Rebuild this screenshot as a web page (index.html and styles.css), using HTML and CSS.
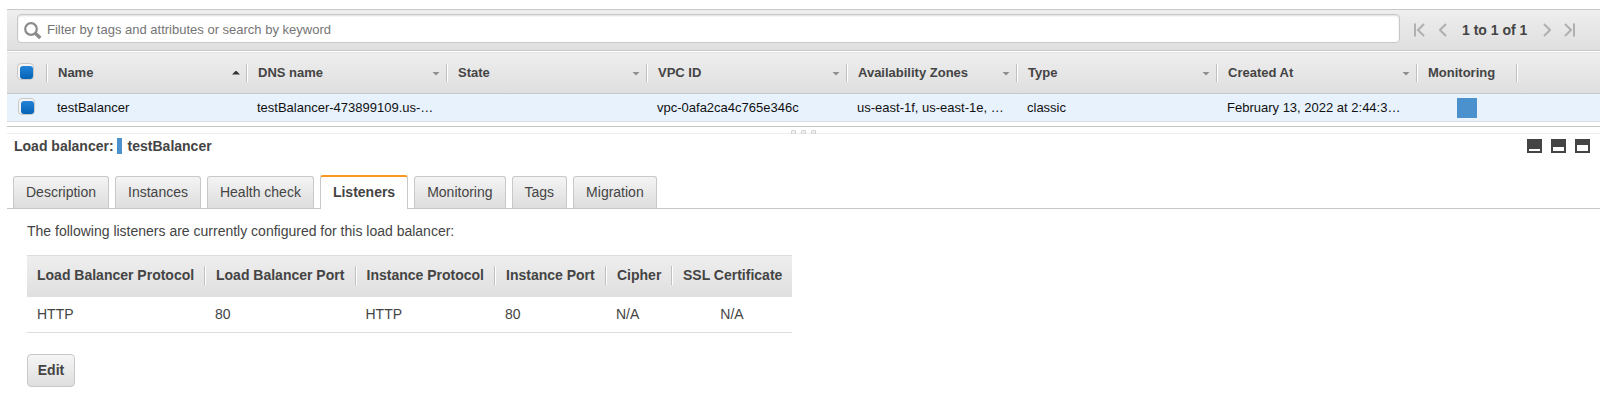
FILE: index.html
```html
<!DOCTYPE html>
<html lang="en">
<head>
<meta charset="utf-8">
<title>Load Balancers</title>
<link rel="stylesheet" href="styles.css">
</head>
<body>
<main class="console">
  <header class="toolbar">
    <div class="search">
      <svg class="search-icon" width="18" height="18" viewBox="0 0 18 18"><circle cx="7" cy="7" r="5.8"/><path d="M11 11l5.3 5"/></svg>
      <span>Filter by tags and attributes or search by keyword</span>
    </div>
    <nav class="pager">
      <svg class="chev first" width="11" height="14" viewBox="0 0 11 14"><path d="M1 0.5v13M10 1L4 7l6 6"/></svg>
      <svg class="chev prev" width="8" height="14" viewBox="0 0 8 14"><path d="M7 1L1 7l6 6"/></svg>
      <strong>1 to 1 of 1</strong>
      <svg class="chev next" width="8" height="14" viewBox="0 0 8 14"><path d="M1 1l6 6-6 6"/></svg>
      <svg class="chev last" width="11" height="14" viewBox="0 0 11 14"><path d="M1 1l6 6-6 6M10 0.5v13"/></svg>
    </nav>
  </header>

  <section class="grid">
    <div class="grid-row grid-head">
      <div class="cell check"><i class="checkbox"></i></div>
      <div class="cell"><span>Name</span><i class="sort-up"></i></div>
      <div class="cell"><span>DNS name</span><i class="sort"></i></div>
      <div class="cell"><span>State</span><i class="sort"></i></div>
      <div class="cell"><span>VPC ID</span><i class="sort"></i></div>
      <div class="cell"><span>Availability Zones</span><i class="sort"></i></div>
      <div class="cell"><span>Type</span><i class="sort"></i></div>
      <div class="cell"><span>Created At</span><i class="sort"></i></div>
      <div class="cell"><span>Monitoring</span></div>
    </div>
    <div class="grid-row grid-item">
      <div class="cell check"><i class="checkbox"></i></div>
      <div class="cell">testBalancer</div>
      <div class="cell">testBalancer-473899109.us-…</div>
      <div class="cell"></div>
      <div class="cell">vpc-0afa2ca4c765e346c</div>
      <div class="cell">us-east-1f, us-east-1e, …</div>
      <div class="cell">classic</div>
      <div class="cell">February 13, 2022 at 2:44:3…</div>
      <div class="cell status"><i class="swatch"></i></div>
    </div>
  </section>

  <div class="splitter"><i></i><i></i><i></i></div>

  <section class="details">
    <div class="title">
      <strong>Load balancer:</strong><i class="marker"></i><strong>testBalancer</strong>
      <div class="panes">
        <i class="pane small"></i><i class="pane half"></i><i class="pane full"></i>
      </div>
    </div>
    <nav class="tabs">
      <a class="tab">Description</a>
      <a class="tab">Instances</a>
      <a class="tab">Health check</a>
      <a class="tab active">Listeners</a>
      <a class="tab">Monitoring</a>
      <a class="tab">Tags</a>
      <a class="tab">Migration</a>
    </nav>
    <div class="content">
      <p>The following listeners are currently configured for this load balancer:</p>
      <div class="listeners">
        <div class="l-row l-head">
          <div>Load Balancer Protocol</div><div>Load Balancer Port</div><div>Instance Protocol</div><div>Instance Port</div><div>Cipher</div><div>SSL Certificate</div>
        </div>
        <div class="l-row l-item">
          <div>HTTP</div><div>80</div><div>HTTP</div><div>80</div><div>N/A</div><div class="center">N/A</div>
        </div>
      </div>
      <button class="edit" type="button">Edit</button>
    </div>
  </section>
</main>
</body>
</html>
```

FILE: styles.css
```css
* { box-sizing: border-box; }
body {
  margin: 0;
  background: #fff;
  color: #444;
  font: 14px/20px "Liberation Sans", Arial, sans-serif;
  overflow: hidden;
}
.console { padding: 9px 0 0 7px; }

.toolbar {
  display: flex;
  height: 42px;
  padding: 4px 0 0 10px;
  border-top: 1px solid #c8c8c8;
  border-bottom: 1px solid #c8c8c8;
  background: linear-gradient(#eee, #dfdfdf);
}
.search {
  display: flex;
  align-items: center;
  width: 1383px;
  height: 29px;
  padding: 0 0 0 6px;
  border: 1px solid #c8c8c8;
  border-radius: 4px;
  background: #fff;
  box-shadow: inset 0 1px 2px #ddd;
  color: #757575;
  font-size: 13px;
}
.search-icon { margin: 4px 5px 0 0; fill: none; stroke: #8c8c8c; stroke-width: 2.2; }
.search-icon path { stroke-width: 3.4; }
.search span { margin-top: 3px; }
.pager { display: flex; align-items: center; height: 32px; padding-left: 14px; }
.chev { fill: none; stroke: #b0b0b0; stroke-width: 2; }
.prev { margin: 0 15px 0 14px; }
.next { margin: 0 13px 0 16px; }

.grid { margin-top: 1px; font-size: 13px; }
.grid-row {
  display: grid;
  grid-template-columns: 40px 200px 200px 200px 200px 170px 200px 200px 100px 1fr;
}
.grid-head {
  height: 42px;
  border-top: 1px solid #e4e4e4;
  border-bottom: 1px solid #c8c8c8;
  background: linear-gradient(#eee, #dfdfdf);
  font-weight: bold;
  align-items: center;
}
.grid-head .cell {
  display: flex;
  align-items: center;
  justify-content: space-between;
  height: 18px;
  padding: 0 6px 0 11px;
  border-right: 1px solid #c0c0c0;
  box-shadow: 1px 0 #fff;
}
.grid-head .check { padding: 0 0 3px 10px; }
.checkbox {
  width: 17px;
  height: 17px;
  padding: 2px 0 0 2px;
  border: 1px solid #c8c8c8;
  border-radius: 4px;
  background: #f4f4f4;
}
.checkbox::before {
  content: "";
  display: block;
  width: 13px;
  height: 13px;
  border-radius: 3px;
  background: linear-gradient(#2383d9, #0463b5);
}
.sort, .sort-up { width: 8px; height: 4px; margin-top: 1px; background: #8e8e8e; clip-path: polygon(0 0, 100% 0, 50% 100%); }
.sort-up { margin-top: -1px; background: #333; clip-path: polygon(50% 0, 100% 100%, 0 100%); }
.grid-item {
  height: 28px;
  border-bottom: 1px solid #dbdde0;
  background: #e7f2fd;
  color: #111;
}
.grid-item .cell { display: flex; align-items: center; padding-left: 10px; white-space: nowrap; }
.grid-item .check { padding: 0 0 2px 11px; }
.grid-item .status { justify-content: center; padding: 1px 0 0; }
.swatch { width: 20px; height: 20px; background: #4a91cd; }

.splitter {
  display: flex;
  justify-content: center;
  gap: 5px;
  height: 8px;
  margin-top: 4px;
  padding-top: 3px;
  border-top: 1px solid #c4c4c4;
  border-bottom: 1px solid #eee;
}
.splitter i { width: 5px; height: 4px; border: 1px solid #d0d0d0; border-bottom: 0; border-radius: 2px 2px 0 0; background: linear-gradient(#fff, #ddd); }

.title { display: flex; align-items: center; height: 24px; padding: 0 10px 0 7px; }
.marker { width: 5px; height: 16px; margin: 0 6px 0 3px; background: #4a91cd; }
.panes { display: flex; gap: 9px; margin-left: auto; }
.pane { width: 15px; height: 14px; border: 2px solid #444; background: #fff; }
.small { border-top-width: 10px; }
.half { border-top-width: 8px; }
.full { border-top-width: 6px; }

.tabs {
  display: flex;
  align-items: flex-end;
  gap: 6px;
  height: 51px;
  padding-left: 6px;
  border-bottom: 1px solid #c8c8c8;
}
.tab {
  height: 32px;
  padding: 5px 12px 0;
  border: 1px solid #c8c8c8;
  border-bottom: 0;
  border-radius: 3px 3px 0 0;
  background: linear-gradient(#f4f4f4, #ddd);
}
.active {
  height: 34px;
  margin-bottom: -1px;
  border-top: 2px solid #f7981f;
  background: #fff;
  font-weight: bold;
}
.content { padding: 12px 0 0 20px; }
.content p { margin: 0 0 14px; }
.listeners { width: 765px; }
.l-row { display: grid; grid-template-columns: 178px 150.5px 139.5px 111px 66px 120px; }
.l-head {
  height: 42px;
  padding-top: 10px;
  border-top: 1px solid #ddd;
  background: linear-gradient(#eee, #dfdfdf);
  font-weight: bold;
}
.l-head div { height: 19px; padding-left: 11px; border-right: 1px solid #c0c0c0; box-shadow: 1px 0 #fff; line-height: 18px; white-space: nowrap; }
.l-head div:first-child, .l-row div:first-child { padding-left: 10px; }
.l-head div:last-child { border: 0; box-shadow: none; }
.l-item { height: 36px; padding-bottom: 2px; border-bottom: 1px solid #ddd; align-items: center; }
.l-item div { padding-left: 10px; }
.l-item .center { padding: 0; text-align: center; }
.edit {
  display: block;
  width: 48px;
  height: 33px;
  margin-top: 21px;
  padding: 0 0 2px;
  border: 1px solid #c8c8c8;
  border-radius: 4px;
  background: linear-gradient(#f5f5f5, #dfdfdf);
  color: #444;
  font: bold 14px "Liberation Sans", Arial, sans-serif;
}
```
